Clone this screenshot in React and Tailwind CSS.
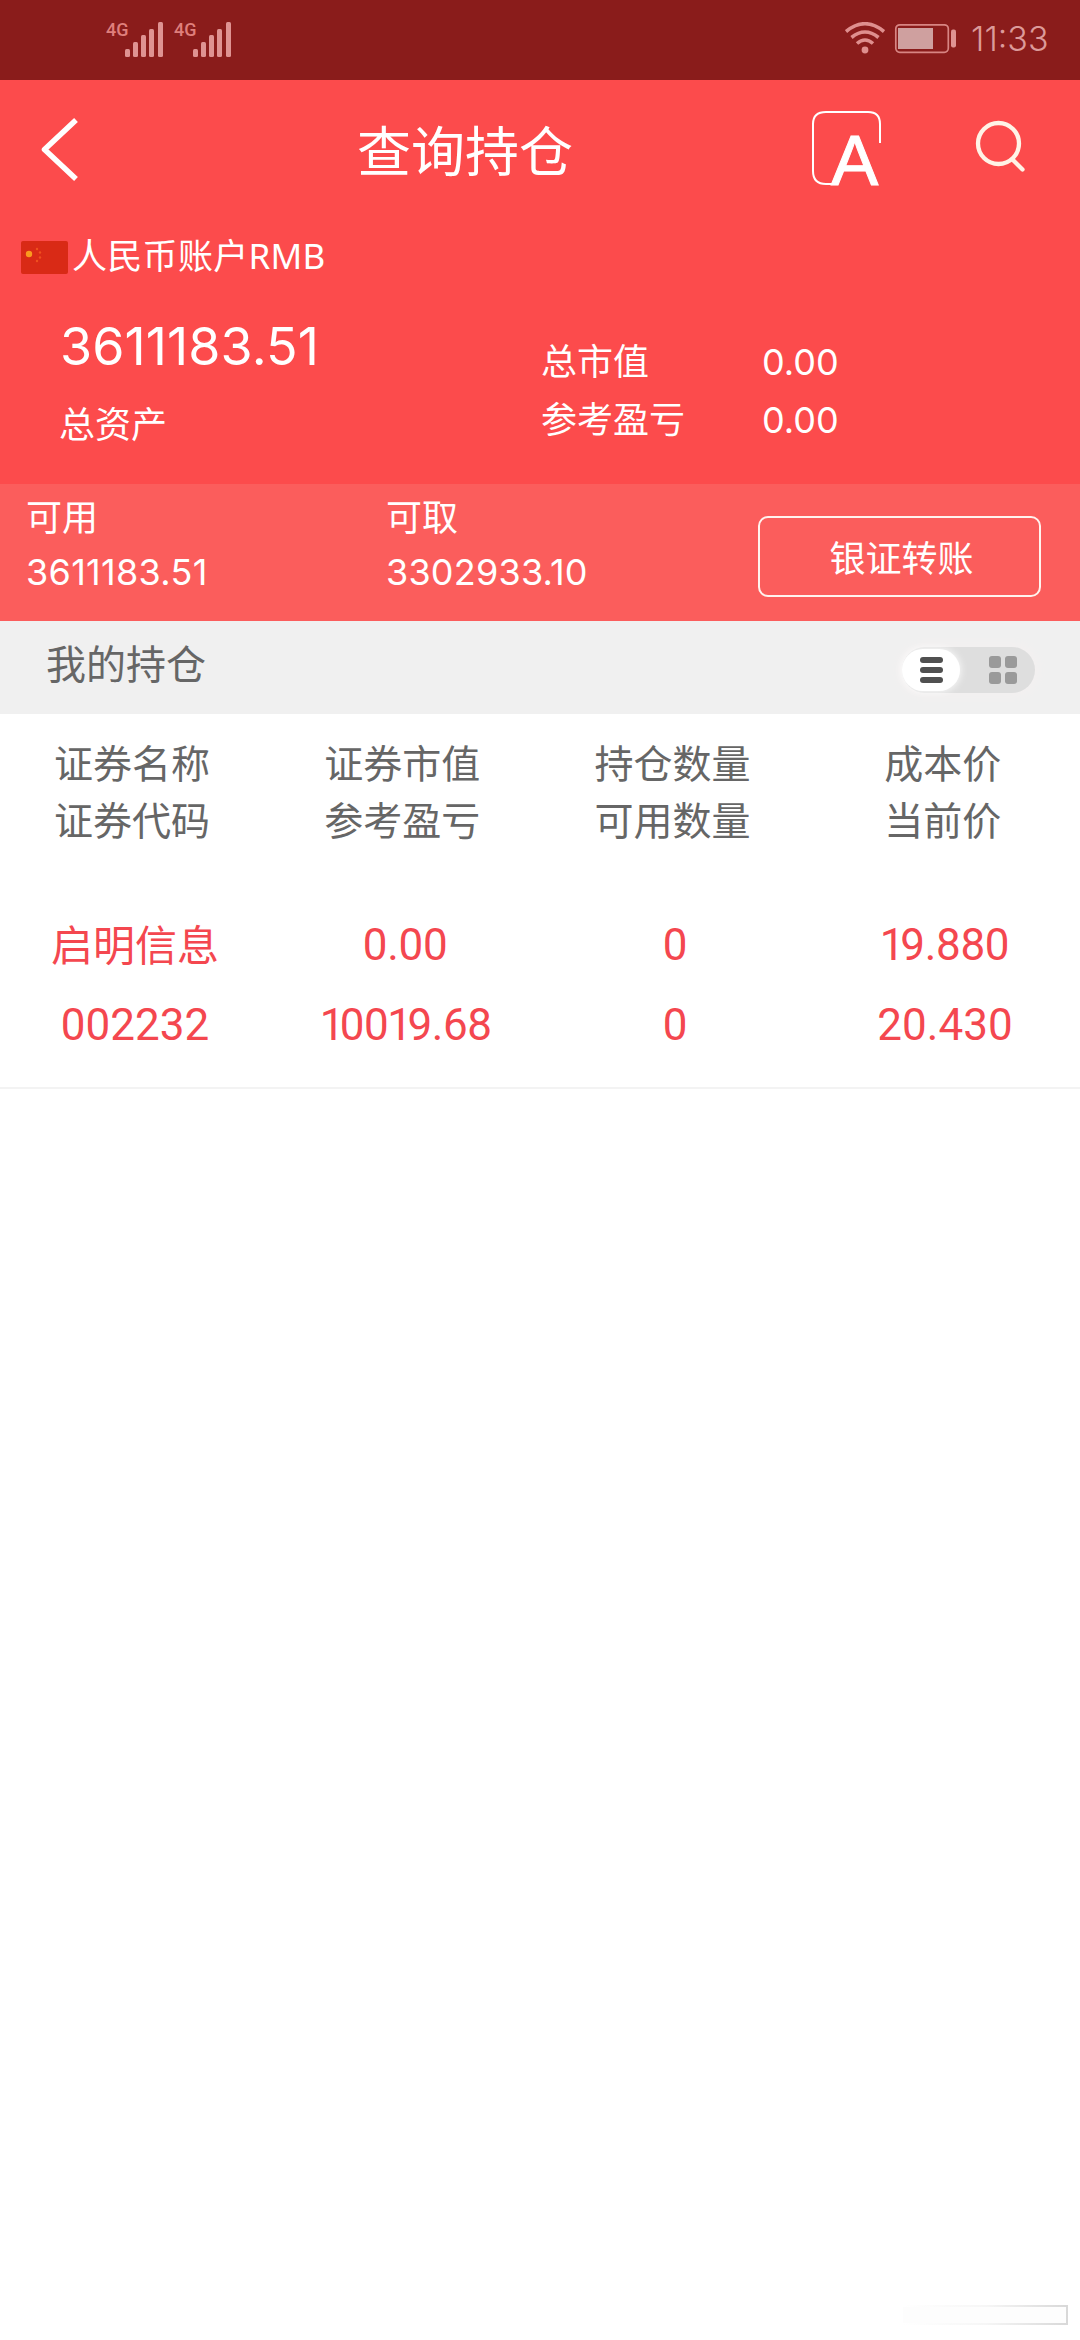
const HEADERS = [
  ['证券名称', '证券代码'],
  ['证券市值', '参考盈亏'],
  ['持仓数量', '可用数量'],
  ['成本价', '当前价'],
]

const HOLDINGS = [
  {
    code: '002232',
    cells: [
      ['启明信息', '002232'],
      ['0.00', '10019.68'],
      ['0', '0'],
      ['19.880', '20.430'],
    ],
  },
]

function Signal() {
  return (
    <div className="relative h-[35px] w-[57px]">
      <span className="absolute left-0 top-0 font-[Roboto] text-[18px] font-medium leading-[16px] text-[#df7f7c]">
        4G
      </span>
      <svg className="absolute inset-0" width="57" height="35" fill="#df9392">
        <rect x="19" y="27" width="5" height="8" rx="1.5" />
        <rect x="27" y="20" width="5" height="15" rx="1.5" />
        <rect x="35" y="13" width="5" height="22" rx="1.5" />
        <rect x="43" y="7" width="5" height="28" rx="1.5" />
        <rect x="52" y="0" width="5" height="35" rx="1.5" />
      </svg>
    </div>
  )
}

function StatusBar() {
  return (
    <div className="flex h-20 items-start justify-between bg-[#8a1c1b] pl-[106px] pr-[32px] pt-[22px]">
      <div className="flex gap-[11px]">
        <Signal />
        <Signal />
      </div>
      <div className="flex items-start">
        <svg width="40" height="34" fill="none" stroke="#df8f8e" strokeWidth="3.6">
          <path d="M1 9.5Q20-6 39 9.5" />
          <path d="M6.500 15.500Q20 4.500 33.500 15.500" />
          <path d="M12 21.500Q20 14.500 28 21.500" />
          <circle cx="20" cy="28" r="3.400" fill="#df8f8e" stroke="none" />
        </svg>
        <svg className="ml-[9px]" width="63" height="34">
          <rect x="1.800" y="2.800" width="52.500" height="27.500" rx="4" fill="none" stroke="#d88583" strokeWidth="1.700" />
          <rect x="4" y="6" width="35" height="21" fill="#cfa09f" />
          <rect x="57" y="7.500" width="5" height="18" rx="2" fill="#df9392" />
        </svg>
        <span className="ml-[14px] mt-px w-[77px] whitespace-nowrap text-[34px] font-light leading-[32px] text-[#dc9a99]">
          11:33
        </span>
      </div>
    </div>
  )
}

function NavBar() {
  return (
    <div className="grid h-[142px] grid-cols-[357px_455px_1fr]">
      <svg className="ml-[38px] mt-[35px]" width="44" height="70" fill="none" stroke="#fff" strokeWidth="5.500" strokeLinejoin="round">
        <path d="M38 5L6.500 34.500L38 64" />
      </svg>
      <h1 className="pt-[39px] text-[54px] leading-[68px] text-white">查询持仓</h1>
      <div className="flex">
        <svg className="mt-[30px] overflow-visible" width="72" height="78">
          <path d="M68 33V14Q68 2 56 2H14Q1 2 1 14V61Q1 74 14 74H24" fill="none" stroke="#fff" strokeWidth="2" />
          <text x="19" y="75" fontSize="71" fontFamily="Liberation Sans" fill="#fff" stroke="#fff" strokeWidth="1">
            A
          </text>
        </svg>
        <svg className="ml-[88px] mt-[38px]" width="60" height="60" fill="none" stroke="#fff3e6" strokeWidth="4.300" strokeLinecap="round">
          <circle cx="26.500" cy="25.500" r="20.500" />
          <path d="M41 42L50.500 51.500" />
        </svg>
      </div>
    </div>
  )
}

function Flag() {
  return (
    <svg width="47" height="33">
      <rect width="47" height="33" rx="2" fill="#d92a16" />
      <circle cx="8" cy="13" r="3.200" fill="#fa9a1f" />
      <g fill="#f0501f">
        <circle cx="16" cy="8" r="1.200" />
        <circle cx="19" cy="11.500" r="1.200" />
        <circle cx="19" cy="16.500" r="1.200" />
        <circle cx="16" cy="20" r="1.200" />
      </g>
    </svg>
  )
}

function Summary() {
  return (
    <div className="h-[262px] pt-[19px] text-white">
      <div className="flex items-center gap-[4px] pl-[21px]">
        <Flag />
        <span className="-mt-[3px] h-[36px] font-['Noto_Sans','Noto_Sans_CJK_SC',sans-serif] text-[35px] leading-[36px] tracking-[0.3px]">
          人民币账户RMB
        </span>
      </div>
      <div className="flex">
        <div className="w-[481px] pl-[60px] pt-[43px]">
          <div className="text-[52px] leading-[60px] tracking-[0.1px]">3611183.51</div>
          <div className="-ml-px mt-[27px] text-[36px] leading-[42px]">总资产</div>
        </div>
        <dl className="grid grid-cols-[221px_1fr] pl-[60px] pt-[59px] text-[36px] leading-[58px]">
          <dt>总市值</dt>
          <dd>0.00</dd>
          <dt>参考盈亏</dt>
          <dd>0.00</dd>
        </dl>
      </div>
    </div>
  )
}

function Balances() {
  return (
    <div className="flex h-[137px] bg-[#fb5d5c] pl-[26px] text-[36px] leading-[54px] text-white">
      <div className="w-[360px] pt-[7px]">
        <div>可用</div>
        <div className="tracking-[0.3px]">3611183.51</div>
      </div>
      <div className="w-[372px] pt-[7px]">
        <div>可取</div>
        <div className="tracking-[0.2px]">3302933.10</div>
      </div>
      <button className="mt-[32px] h-[81px] w-[283px] rounded-[10px] border-2 border-[#fff3ee] pl-[4px] pt-[5px]">
        银证转账
      </button>
    </div>
  )
}

function ViewToggle() {
  return (
    <div className="mt-[26px] flex h-[46px] w-[133px] items-center rounded-full bg-[#dedede] shadow-[0_0_8px_4px_#f3f0f0]">
      <div className="flex h-[42px] w-[58px] flex-col items-center justify-center gap-[4px] rounded-full bg-white shadow-[0_0_8px_#fff]">
        <i className="h-[6px] w-[23px] rounded-[3px] bg-[#505050]" />
        <i className="h-[6px] w-[23px] rounded-[3px] bg-[#505050]" />
        <i className="h-[6px] w-[23px] rounded-[3px] bg-[#505050]" />
      </div>
      <div className="ml-[29px] grid grid-cols-2 gap-[4px]">
        {[0, 1, 2, 3].map((i) => (
          <i key={i} className="size-[12px] rounded-[3px] bg-[#9a9a9a]" />
        ))}
      </div>
    </div>
  )
}

// Roboto's figures are tabular, so the ones are pulled in by hand
function Digits({ value }) {
  return value.split('').map((c, i) =>
    c === '1' ? (
      <span key={i} className="-ml-px -mr-[4px]">
        1
      </span>
    ) : (
      c
    ),
  )
}

function Holdings() {
  return (
    <div>
      <div className="flex h-[93px] justify-between bg-[#f0f0f0] pl-[46px] pr-[45px]">
        <h2 className="pt-[14px] text-[40px] leading-[60px] text-[#666]">我的持仓</h2>
        <ViewToggle />
      </div>
      <div className="-ml-[3px] grid w-[1081px] grid-cols-4 pt-[21px] text-center text-[39px] leading-[57px] text-[#666]">
        {HEADERS.map(([top, bottom]) => (
          <div key={top}>
            <div>{top}</div>
            <div>{bottom}</div>
          </div>
        ))}
      </div>
      {HOLDINGS.map((h) => (
        <div
          key={h.code}
          className="grid h-[240px] grid-cols-4 border-b-2 border-[#f3f3f3] pt-[56px] text-center font-[Roboto,'Noto_Sans_CJK_SC',sans-serif] text-[44px] leading-[80px] text-[#f4474f]"
        >
          {h.cells.map(([top, bottom], i) => (
            <div key={i}>
              <div className={i === 0 ? 'h-[80px] pt-[2px] text-[42px]' : 'h-[80px] tracking-[-0.3px]'}>
                <Digits value={top} />
              </div>
              <div className={i === 1 ? 'pl-[2px] tracking-[-0.5px]' : ''}>
                <Digits value={bottom} />
              </div>
            </div>
          ))}
        </div>
      ))}
    </div>
  )
}

export default function App() {
  return (
    <div className="flex h-[2340px] w-[1080px] flex-col overflow-hidden bg-white font-[Inter,'Noto_Sans_CJK_SC',sans-serif]">
      <StatusBar />
      <div className="bg-[#fc4b4c]">
        <NavBar />
        <Summary />
        <Balances />
      </div>
      <Holdings />
      {/* faded drawer handle */}
      <div className="mb-[15px] ml-auto mr-[12px] mt-auto h-[20px] w-[165px] bg-linear-to-r from-transparent via-[#f6f6f6] to-[#d8d8d8] pb-[2px] pr-[2px] pt-[2px]">
        <div className="h-full bg-[#fdfdfd]" />
      </div>
    </div>
  )
}
